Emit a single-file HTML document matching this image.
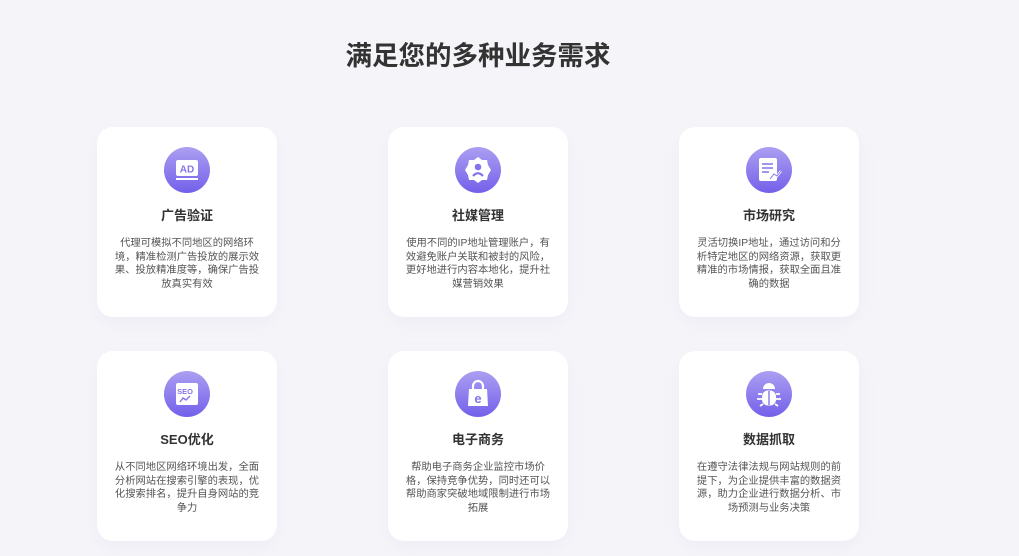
<!DOCTYPE html>
<html><head><meta charset="utf-8"><style>
*{margin:0;padding:0;box-sizing:border-box}
body{width:1019px;height:556px;background:#f5f5f9;position:relative;overflow:hidden;font-family:"Liberation Sans","Noto Sans CJK SC",sans-serif;}
h1{position:absolute;left:0;width:956px;top:34px;text-align:center;font-size:26.5px;font-weight:bold;color:#333;letter-spacing:0}
.card{position:absolute;width:180px;height:190px;background:#fff;border-radius:16px;box-shadow:0 6px 20px rgba(120,110,200,0.06);text-align:center}
.ic{position:absolute;left:67px;top:20px;width:46px;height:46px;border-radius:50%;background:linear-gradient(180deg,#ab9ff1,#7360ea)}
.ic svg{position:absolute;left:0;top:0}
.t{position:absolute;top:80px;left:0;width:180px;font-size:13px;font-weight:bold;color:#333;line-height:18px}
.d{position:absolute;top:110px;left:10px;width:160px;font-size:10.3px;color:#555;line-height:13.5px}
</style></head><body>
<h1>满足您的多种业务需求</h1>

<div class="card" style="left:97px;top:127px">
<div class="ic"><svg width="46" height="46" viewBox="0 0 46 46"><rect x="12" y="13" width="22" height="16" rx="2" fill="#fff"/><text x="23" y="25.5" font-size="10" font-weight="bold" fill="#8474ec" text-anchor="middle" font-family="Liberation Sans">AD</text><rect x="12" y="31" width="22" height="2" fill="#fff"/></svg></div>
<div class="t">广告验证</div>
<div class="d">代理可模拟不同地区的网络环<br>境，精准检测广告投放的展示效<br>果、投放精准度等，确保广告投<br>放真实有效</div>
</div>

<div class="card" style="left:388px;top:127px">
<div class="ic"><svg width="46" height="46" viewBox="0 0 46 46"><path d="M23 10 L27 13 L32 13 L33 18 L36 23 L33 28 L32 33 L27 33 L23 36 L19 33 L14 33 L13 28 L10 23 L13 18 L14 13 L19 13Z" fill="#fff"/><circle cx="23" cy="20" r="3.3" fill="#8474ec"/><path d="M18 29 Q23 23.5 28 29" stroke="#8474ec" stroke-width="2.2" fill="none"/></svg></div>
<div class="t">社媒管理</div>
<div class="d">使用不同的IP地址管理账户，有<br>效避免账户关联和被封的风险，<br>更好地进行内容本地化，提升社<br>媒营销效果</div>
</div>

<div class="card" style="left:679px;top:127px">
<div class="ic"><svg width="46" height="46" viewBox="0 0 46 46"><rect x="13" y="11" width="18" height="23" rx="2" fill="#fff"/><path d="M16 17h11M16 21h11M16 25h7" stroke="#8474ec" stroke-width="1.6"/><path d="M24 32 L28 27 L31 29 L35 24" stroke="#fff" stroke-width="2.5" fill="none"/><path d="M24 32 L28 27 L31 29 L35 24" stroke="#8474ec" stroke-width="1" fill="none"/></svg></div>
<div class="t">市场研究</div>
<div class="d">灵活切换IP地址，通过访问和分<br>析特定地区的网络资源，获取更<br>精准的市场情报，获取全面且准<br>确的数据</div>
</div>

<div class="card" style="left:97px;top:351px">
<div class="ic"><svg width="46" height="46" viewBox="0 0 46 46"><rect x="12" y="12" width="22" height="22" rx="2" fill="#fff"/><text x="21" y="23" font-size="7.5" font-weight="bold" fill="#8474ec" text-anchor="middle" font-family="Liberation Sans">SEO</text><path d="M16 31 L19 27 L22 29 L26 25" stroke="#8474ec" stroke-width="1.4" fill="none"/></svg></div>
<div class="t">SEO优化</div>
<div class="d">从不同地区网络环境出发，全面<br>分析网站在搜索引擎的表现，优<br>化搜索排名，提升自身网站的竞<br>争力</div>
</div>

<div class="card" style="left:388px;top:351px">
<div class="ic"><svg width="46" height="46" viewBox="0 0 46 46"><path d="M18 18 V15 A5 5 0 0 1 28 15 V18" stroke="#fff" stroke-width="2.2" fill="none"/><path d="M14 18 H32 L33 35 H13Z" fill="#fff"/><text x="23" y="32" font-size="13" font-weight="bold" fill="#8474ec" text-anchor="middle" font-family="Liberation Sans">e</text></svg></div>
<div class="t">电子商务</div>
<div class="d">帮助电子商务企业监控市场价<br>格，保持竞争优势，同时还可以<br>帮助商家突破地域限制进行市场<br>拓展</div>
</div>

<div class="card" style="left:679px;top:351px">
<div class="ic"><svg width="46" height="46" viewBox="0 0 46 46"><path d="M17 18 A6 6 0 0 1 29 18Z" fill="#fff"/><rect x="16" y="19.5" width="14" height="15" rx="6" fill="#fff"/><path d="M23 20v14" stroke="#8474ec" stroke-width="1.4"/><path d="M16 23h-4M30 23h4M16 28h-5M30 28h5M17 33l-3 2M29 33l3 2" stroke="#fff" stroke-width="1.8"/></svg></div>
<div class="t">数据抓取</div>
<div class="d">在遵守法律法规与网站规则的前<br>提下，为企业提供丰富的数据资<br>源，助力企业进行数据分析、市<br>场预测与业务决策</div>
</div>
</body></html>
